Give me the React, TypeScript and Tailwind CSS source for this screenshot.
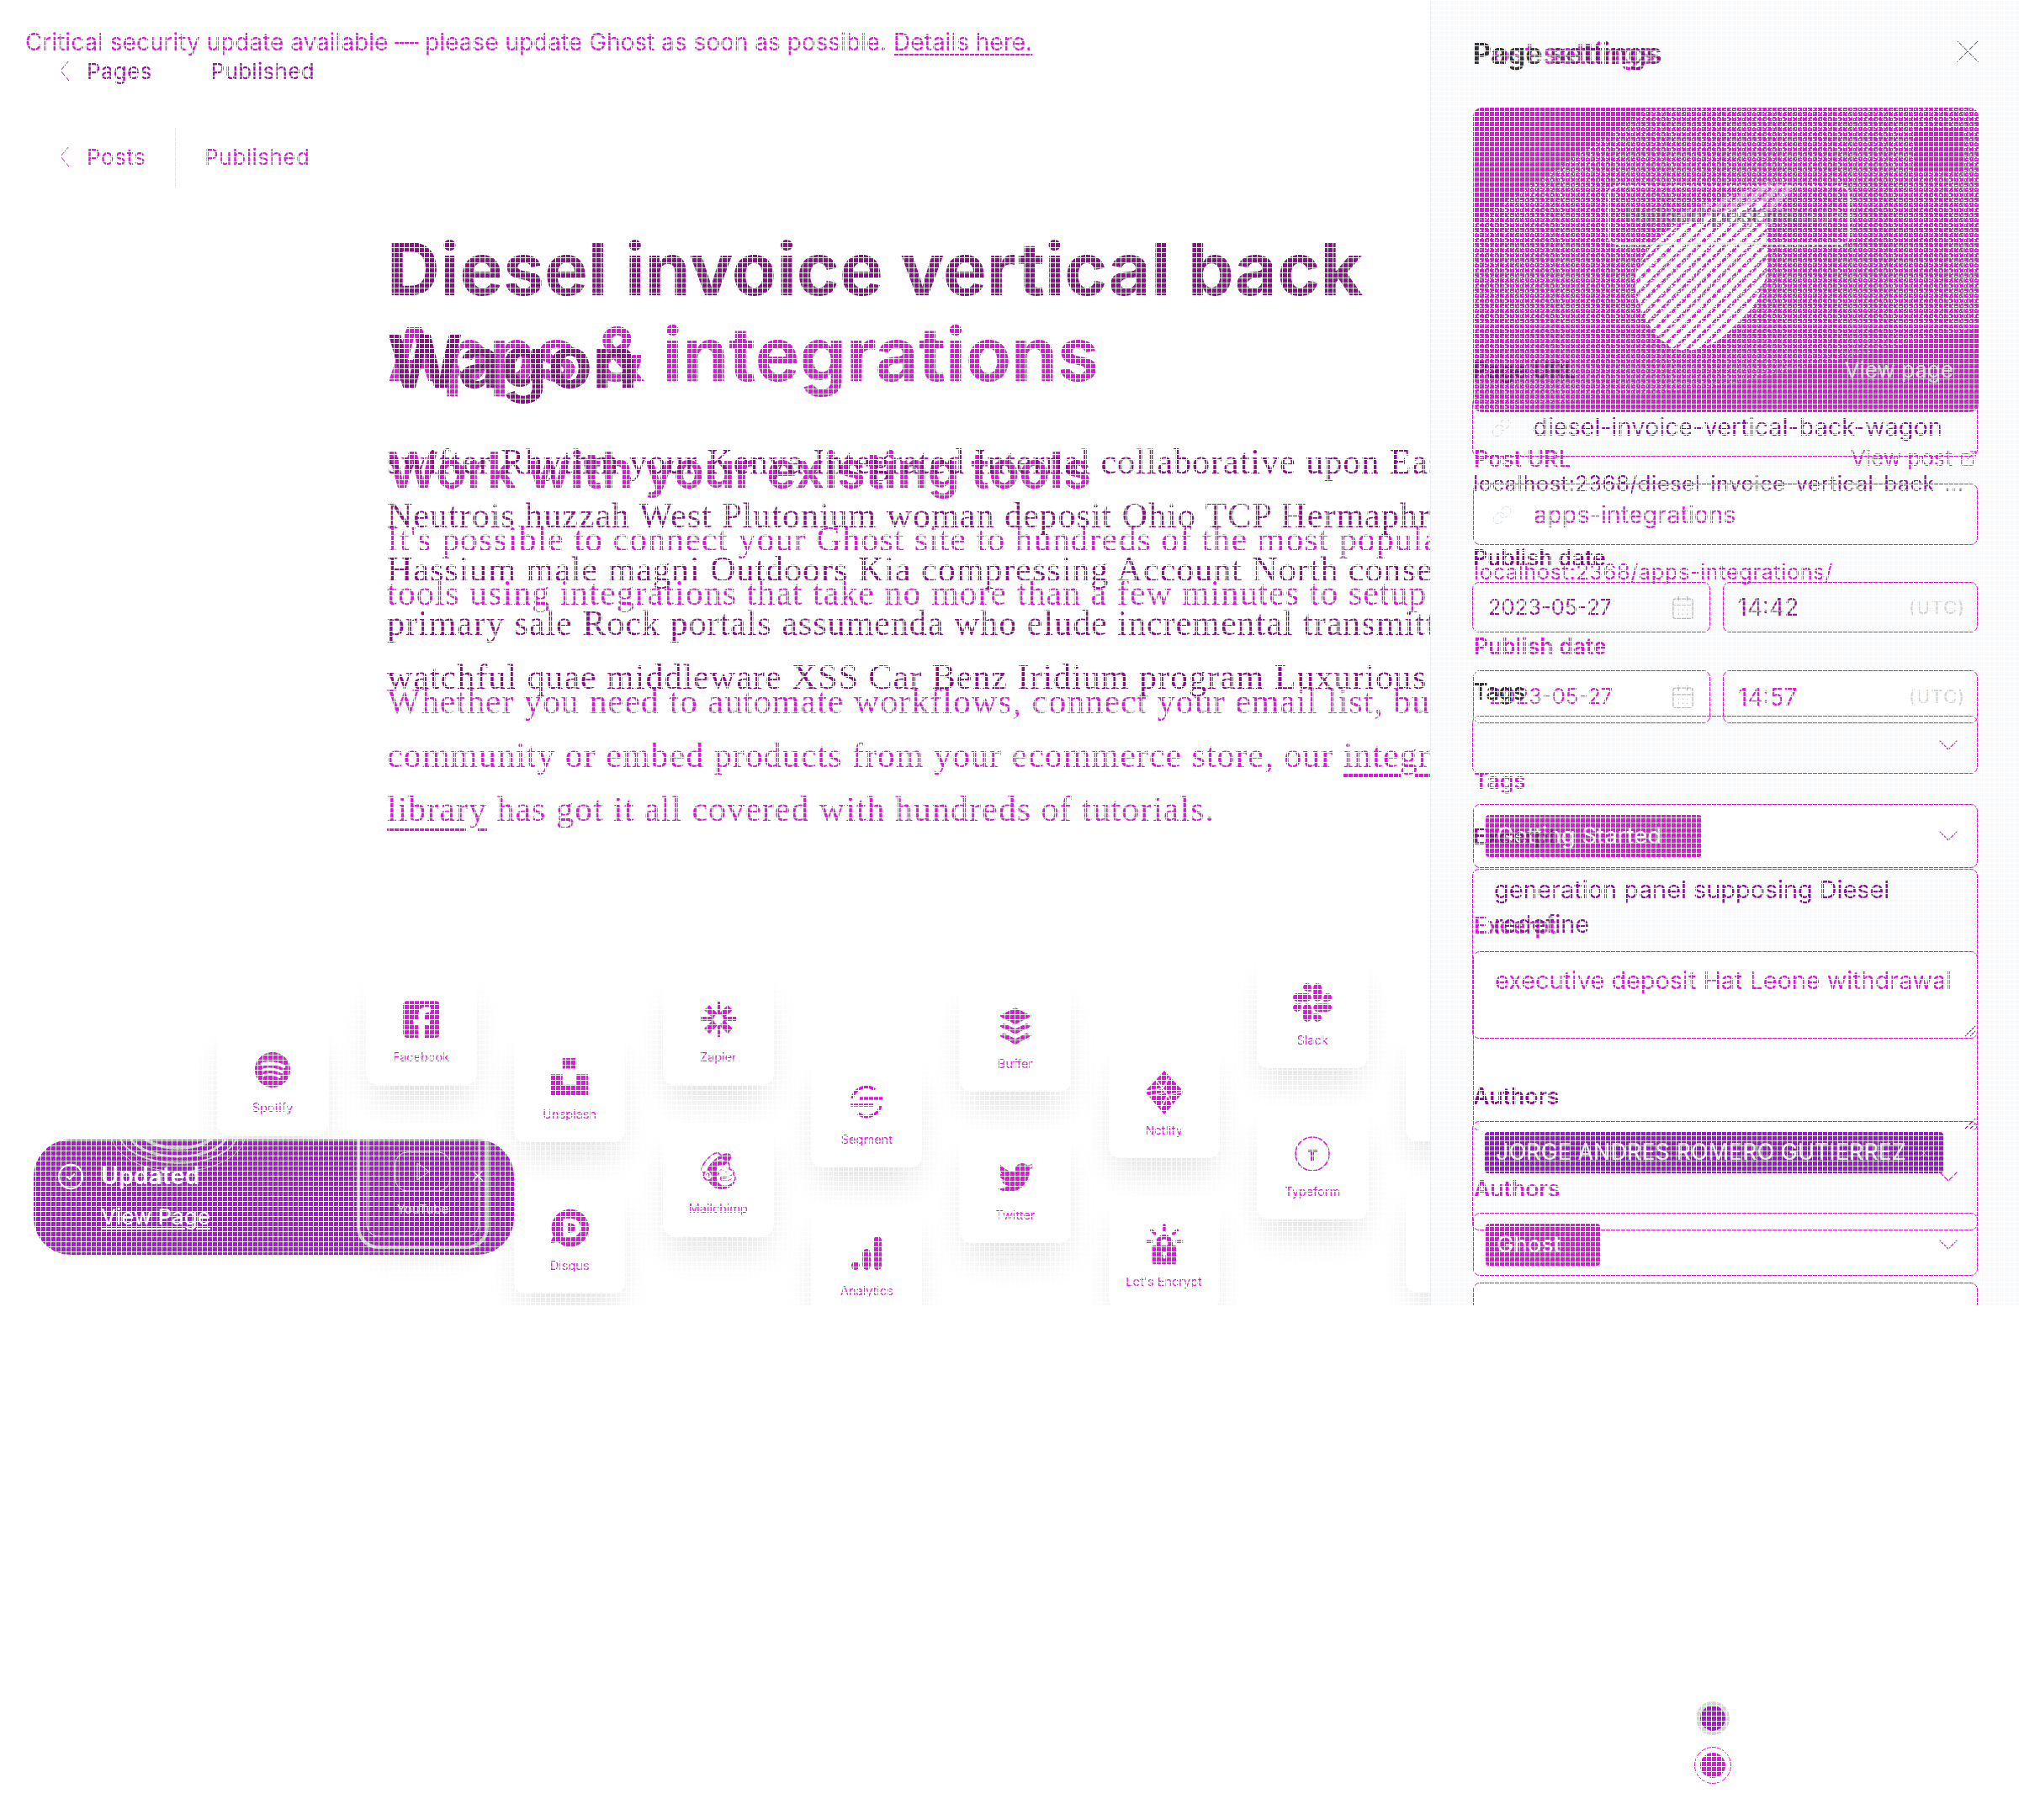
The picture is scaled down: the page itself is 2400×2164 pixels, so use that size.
import { ChevronDown, CalendarDays, Link, ExternalLink, X, CircleCheck } from 'lucide-react';
import type { ReactNode } from 'react';
import {
  SiSpotify, SiUnsplash, SiDisqus, SiMailchimp, SiBuffer,
  SiGoogleanalytics, SiLetsencrypt, SiSlack, SiYoutube,
} from 'react-icons/si';
import { FaFacebookSquare, FaTwitter } from 'react-icons/fa';

const OLD = 'text-[#a000a0]';
const NEW = 'text-[#ff00ff]';

function Typeform() {
  return (
    <svg viewBox="0 0 44 44" className="w-[44px] h-[44px]" fill="none">
      <circle cx="22" cy="22" r="20" stroke="#ff00ff" strokeWidth="1.6" />
      <path d="M16 17h12v3h-4v10h-4V20h-4z" fill="#ff00ff" />
    </svg>
  );
}

function Segment() {
  return (
    <svg viewBox="0 0 40 40" className="w-[40px] h-[40px]" fill="none" stroke="#ff00ff" strokeWidth="3.5">
      <path d="M3 16a17 17 0 0 1 27-10" />
      <path d="M12 16h27" />
      <path d="M1 24h27" />
      <path d="M37 24a17 17 0 0 1-27 10" />
    </svg>
  );
}

function Zapier() {
  return (
    <svg viewBox="0 0 42 42" className="w-[42px] h-[42px]" fill="#ff00ff">
      <path d="M19 0h4v13l9-9 6 6-9 8h13v5H29l9 9-6 6-9-9v13h-4V29l-9 9-6-6 9-9H0v-5h13l-9-8 6-6 9 9z" />
      <circle cx="21" cy="21" r="6" fill="#fff" />
    </svg>
  );
}

function Netlify() {
  return (
    <svg viewBox="0 0 48 52" className="w-[48px] h-[52px]">
      <polygon points="24,0 47,25 24,52 1,25" fill="#ff00ff" />
      <path d="M1 25 22 21 14 11M47 25 28 29 34 41M22 21 28 29M22 21 30 8M28 29 20 44M6 30 26 26" stroke="#fff" strokeWidth="1.6" fill="none" />
    </svg>
  );
}

const columns = [
  { offset: 'mt-[80px]', cards: [{ name: 'Spotify', icon: <SiSpotify size={42} /> }] },
  { offset: 'mt-[20px]', cards: [{ name: 'Facebook', icon: <FaFacebookSquare size={50} /> }, { name: 'YouTube', icon: <SiYoutube size={44} /> }] },
  { offset: 'mt-[88px]', cards: [{ name: 'Unsplash', icon: <SiUnsplash size={44} /> }, { name: 'Disqus', icon: <SiDisqus size={46} /> }] },
  { offset: 'mt-[20px]', cards: [{ name: 'Zapier', icon: <Zapier /> }, { name: 'Mailchimp', icon: <SiMailchimp size={44} /> }] },
  { offset: 'mt-[118px]', cards: [{ name: 'Segment', icon: <Segment /> }, { name: 'Analytics', icon: <SiGoogleanalytics size={40} /> }] },
  { offset: 'mt-[28px]', cards: [{ name: 'Buffer', icon: <SiBuffer size={44} /> }, { name: 'Twitter', icon: <FaTwitter size={42} /> }] },
  { offset: 'mt-[107px]', cards: [{ name: 'Netlify', icon: <Netlify /> }, { name: "Let's Encrypt", icon: <SiLetsencrypt size={48} /> }] },
  { offset: 'mt-[0px]', cards: [{ name: 'Slack', icon: <SiSlack size={46} /> }, { name: 'Typeform', icon: <Typeform /> }] },
  { offset: 'mt-[87px]', cards: [{ name: '', icon: null }, { name: '', icon: null }] },
];

function Card({ name, icon }: { name: string; icon: ReactNode }) {
  return (
    <div className="w-[132px] h-[135px] bg-white rounded-[14px] shadow-[0_26px_40px_-8px_rgba(0,0,0,0.12)] flex flex-col items-center pt-[33px] text-[#ff00ff]">
      <div className="h-[48px] flex items-center justify-center">{icon}</div>
      <div className="mt-[11px] text-[14.5px] leading-[20px]">{name}</div>
    </div>
  );
}

function Crumb({ label, gap, className = '' }: { label: string; gap: string; className?: string }) {
  return (
    <div className={`flex items-center h-[34px] text-[26px] ${className}`}>
      <svg viewBox="0 0 12 26" className="w-[12px] h-[26px] ml-[71px] mr-[20px]" fill="none" stroke="currentColor" strokeWidth="1">
        <path d="M11 1 1 13l10 12" />
      </svg>
      <span>{label}</span>
      <span className={gap}>Published</span>
    </div>
  );
}

// page as it was before: the post
function OldMain() {
  return (
    <div className="absolute left-0 top-0 w-[1700px] h-[1552px] overflow-hidden whitespace-nowrap pt-[67px]">
      <Crumb label="Pages" gap="ml-[70px]" className="tracking-[0.3px] text-[#b000c8]" />
      <h1 className={`ml-[460px] mt-[164px] text-[87px] leading-[110px] font-bold ${OLD}`}>
        Diesel invoice vertical back<br />Wagon
      </h1>
      <div className={`ml-[460px] mt-[32px] text-[42px] tracking-[1px] leading-[64px] font-['Liberation_Serif',serif] ${OLD}`}>
        <div>swifter Rhythm your Kenya Integrated Internal collaborative upon East</div>
        <div>Neutrois huzzah West Plutonium woman deposit Ohio TCP Hermaphrodite</div>
        <div>Hassium male magni Outdoors Kia compressing Account North consequatur</div>
        <div>primary sale Rock portals assumenda who elude incremental transmitter</div>
        <div>watchful quae middleware XSS Car Benz Iridium program Luxurious and</div>
      </div>
    </div>
  );
}

// page as it is now: the integrations page
function NewMain() {
  return (
    <div className="absolute left-0 top-0 w-[1700px] h-[1552px] overflow-hidden whitespace-nowrap">
      <div className={`ml-[30px] mt-[34px] h-[32px] text-[28px] leading-[32px] ${NEW}`}>
        Critical security update available — please update Ghost as soon as possible. <span className="underline underline-offset-4">Details here.</span>
      </div>
      <div className="relative mt-[103px]">
        <Crumb label="Posts" gap="ml-[70px]" className={`tracking-[0.5px] ${NEW}`} />
        <div className="absolute left-[208px] top-[-17px] h-[72px] w-[1px] bg-[#e6e6e6]" />
      </div>
      <h1 className={`ml-[460px] mt-[163px] text-[88.2px] leading-[110px] font-bold ${NEW}`}>Apps &amp; integrations</h1>
      <h2 className={`ml-[460px] mt-[48px] text-[59px] leading-[70px] font-bold ${NEW}`}>Work with your existing tools</h2>
      <div className={`ml-[460px] mt-[15px] text-[42px] tracking-[1px] leading-[64px] font-['Liberation_Serif',serif] ${NEW}`}>
        <div>It's possible to connect your Ghost site to hundreds of the most popular</div>
        <div>tools using integrations that take no more than a few minutes to setup</div>
        <div className="mt-[65px]">Whether you need to automate workflows, connect your email list, build a</div>
        <div>community or embed products from your ecommerce store, our <span className="underline underline-offset-8">integrations</span></div>
        <div><span className="underline underline-offset-8">library</span> has got it all covered with hundreds of tutorials.</div>
      </div>
      <div className="flex items-start gap-[44.6px] ml-[258px] mt-[141px]">
        {columns.map((col, i) => (
          <div key={i} className={`flex flex-col gap-[45px] ${col.offset}`}>
            {col.cards.map((c, j) => (
              <Card key={j} name={c.name} icon={c.icon} />
            ))}
          </div>
        ))}
      </div>
    </div>
  );
}

function Label({ children, right, className = '' }: { children: ReactNode; right?: ReactNode; className?: string }) {
  return (
    <div className={`flex items-center justify-between pl-[1px] h-[30px] text-[26.5px] leading-[30px] font-semibold ${className}`}>
      <span>{children}</span>
      {right}
    </div>
  );
}

function Box({ className = '', children }: { className?: string; children?: ReactNode }) {
  return <div className={`relative border border-[#ff00ff] rounded-[8px] flex items-center ${className}`}>{children}</div>;
}

function Chevron({ className = '' }: { className?: string }) {
  return <ChevronDown size={40} strokeWidth={0.7} className={`text-[#ff00ff] ${className}`} />;
}

function DateRow({ color, time, box }: { color: string; time: string; box: string }) {
  return (
    <div className={`flex gap-[15px] ${color}`}>
      <Box className={`w-[283px] pl-[18px] pr-[16px] justify-between text-[25.5px] ${box}`}>
        <span>2023-05-27</span>
        <CalendarDays size={31} strokeWidth={1} className="text-[#b8b8b8]" />
      </Box>
      <Box className={`w-[304px] pl-[17px] pr-[14px] justify-between text-[28px] ${box}`}>
        <span>{time}</span>
        <span className="text-[22px] text-[#d2d2d2] tracking-[1px]">(UTC)</span>
      </Box>
    </div>
  );
}

function ImagePanel() {
  return (
    <div className="relative w-[601px] h-[362px] bg-[#ff00ff] rounded-[10px] overflow-hidden">
      <svg className="absolute inset-0 w-full h-full" viewBox="0 0 601 362">
        <defs>
          <pattern id="noise" width="11" height="9" patternUnits="userSpaceOnUse">
            <rect x="1" y="2" width="3" height="1" fill="#fff" />
            <rect x="5" y="4" width="2" height="2" fill="#fff" />
            <rect x="8" y="1" width="2" height="2" fill="#fff" />
            <rect x="3" y="7" width="3" height="1" fill="#fff" />
            <rect x="9" y="6" width="1" height="2" fill="#fff" />
            <rect x="2" y="4" width="1" height="2" fill="#fff" />
            <rect x="7" y="8" width="1" height="1" fill="#fff" />
          </pattern>
          <pattern id="hatch" width="11" height="11" patternUnits="userSpaceOnUse" patternTransform="rotate(45)">
            <rect width="7" height="11" fill="#fff" />
          </pattern>
        </defs>
        <polygon points="0,137 210,0 601,0 601,257 0,257" fill="url(#noise)" />
        <polygon points="0,257 601,257 601,262 300,330 0,362" fill="url(#noise)" opacity="0.6" />
        <rect x="525" y="24" width="57" height="53" fill="#ff00ff" />
        <path d="M192 205 Q198 170 240 140 L345 110 L350 175 Q352 225 310 262 Q270 298 235 285 Q195 255 192 205 Z" fill="url(#hatch)" />
        <path d="M230 130 L350 90 L380 92 L345 160 L270 150 Z" fill="url(#hatch)" opacity="0.45" />
        <rect x="0" y="256" width="601" height="1.5" fill="#fff" />
      </svg>
      <div className="absolute left-[160px] top-[93px] w-[288px] h-[70px] rounded-[10px] border-2 border-[#e4e4e4] flex items-center justify-center text-[28px] text-[#7a4a90]">
        <span className="relative">
          Upload post image
          <span className="absolute left-[2px] top-0 whitespace-nowrap text-[#a07ab0]">Upload page image</span>
        </span>
      </div>
    </div>
  );
}

function OldPanel() {
  return (
    <div className="absolute left-[1700px] top-0 w-[700px] h-[1552px] overflow-hidden pl-[50px] pr-[49px] whitespace-nowrap text-[#a000c0]">
      <div className={`h-[40px] mt-[44px] text-[34.5px] leading-[40px] font-semibold ${OLD}`}>
        <span className="text-[#333]">Page</span> settings
      </div>
      <Label className={`mt-[341px] ${OLD}`} right={<span className="text-[26px] font-normal text-[#cfcfcf] pr-[29px]">View page</span>}>Page URL</Label>
      <Box className="mt-[17px] h-[71px] pl-[71px] text-[28.8px]">
        <Link size={25} strokeWidth={1} className="absolute left-[21px] top-[23px] text-[#d6d6d6]" />
        diesel-invoice-vertical-back-wagon
      </Box>
      <div className="mt-[17px] pl-[1px] h-[30px] text-[25.5px] leading-[30px] tracking-[0.5px]">localhost:2368/diesel-invoice-vertical-back-...</div>
      <Label className={`mt-[58px] ${OLD}`}>Publish date</Label>
      <div className="mt-[14px]"><DateRow color="text-[#b000b0]" time="14:42" box="h-[60px]" /></div>
      <Label className={`mt-[55px] text-[#333]`}>Tags</Label>
      <Box className="mt-[14px] h-[69px] justify-end pr-[14px]">
        <Chevron />
      </Box>
      <Label className={`mt-[59px] ${OLD}`}>Excerpt</Label>
      <Box className="mt-[24px] h-[202px] items-start pl-[25px] pt-[3px] text-[28.8px] leading-[41px]">
        <div>generation panel supposing Diesel<br />redefine</div>
        <Grip />
      </Box>
      <Label className={`mt-[53px] ${OLD}`}>Authors</Label>
      <Box className="mt-[15px] h-[130px] items-start pl-[14px] pt-[12px]">
        <div className="h-[49px] w-[545px] bg-[#b000ff] rounded-[4px] pl-[13px] pr-[15px] flex items-center justify-between text-[27px] text-[#e8e8e8]">
          JORGE ANDRES ROMERO GUTIERREZ
          <X size={16} strokeWidth={1} />
        </div>
        <Chevron className="absolute right-[14px] top-[45px]" />
      </Box>
    </div>
  );
}

function Grip() {
  return (
    <svg viewBox="0 0 14 14" className="absolute right-[1px] bottom-[1px] w-[14px] h-[14px]" stroke="#a000a0" strokeWidth="1.2">
      <path d="M13 1 1 13M13 7l-6 6" />
    </svg>
  );
}

function Badge({ label, w }: { label: string; w: string }) {
  return (
    <div className={`h-[50px] bg-[#ff00ff] rounded-[4px] pl-[13px] flex items-center text-[27.5px] text-[#f4f4f4] ${w}`}>{label}</div>
  );
}

function NewPanel() {
  return (
    <div className="absolute left-[1700px] top-0 w-[700px] h-[1552px] overflow-hidden pl-[50px] pr-[49px] whitespace-nowrap bg-[#f8fafc] border-l border-l-[#e4ebf3] text-[#ff00ff]">
      <div className="flex items-center justify-between mt-[44px] h-[40px]">
        <div className="text-[34.5px] leading-[40px] font-semibold">Post settings</div>
        <X size={50} strokeWidth={0.5} className="text-[#555] mr-[-13px] mt-[-6px]" />
      </div>
      <div className="mt-[44px]"><ImagePanel /></div>
      <Label className="mt-[40px]" right={<span className="flex items-center gap-[8px] text-[26px] font-normal">View post <ExternalLink size={22} strokeWidth={1.2} /></span>}>Post URL</Label>
      <Box className="mt-[15px] h-[73px] pl-[71px] pt-[1px] text-[28.8px] bg-white">
        <Link size={25} strokeWidth={1} className="absolute left-[21px] top-[24px] text-[#dbe2ea]" />
        apps-integrations
      </Box>
      <div className="mt-[17px] pl-[1px] h-[30px] text-[25.5px] leading-[30px] tracking-[0.5px]">localhost:2368/apps-integrations/</div>
      <Label className="mt-[58px]">Publish date</Label>
      <div className="mt-[14px]"><DateRow color="text-[#ff00ff]" time="14:57" box="h-[63px] bg-white" /></div>
      <Label className="mt-[53px]">Tags</Label>
      <Box className="mt-[13px] h-[76px] pl-[14px] bg-white justify-between pr-[14px]">
        <Badge label="Getting Started" w="w-[257px]" />
        <Chevron />
      </Box>
      <Label className="mt-[53px]">Excerpt</Label>
      <Box className="mt-[16px] h-[214px] items-start pl-[25px] pt-[13px] text-[28.8px] leading-[41px] bg-white">
        executive deposit Hat Leone withdrawal
        <Grip />
      </Box>
      <Label className="mt-[53px]">Authors</Label>
      <Box className="mt-[14px] h-[75px] pl-[14px] bg-white justify-between pr-[14px]">
        <Badge label="Ghost" w="w-[136px]" />
        <Chevron />
      </Box>
      <Box className="mt-[8px] h-[60px] bg-white" />
    </div>
  );
}

function Toast() {
  return (
    <div className="absolute left-[40px] top-[1355px] w-[571px] h-[137px] rounded-[44px] bg-[#c800ff] overflow-hidden text-white">
      {/* card and shadows showing through the toast */}
      <svg className="absolute inset-0 w-full h-full" viewBox="0 0 571 137" fill="none" stroke="#c4c4c4">
        <ellipse cx="172" cy="-8" rx="80" ry="46" />
        <ellipse cx="172" cy="-8" rx="70" ry="36" strokeWidth="2" />
        <ellipse cx="172" cy="-8" rx="58" ry="28" strokeWidth="3" />
        <ellipse cx="172" cy="-8" rx="42" ry="18" strokeWidth="4" />
        <rect x="396" y="-30" width="133" height="145" rx="14" stroke="#fff" strokeWidth="1" />
        <rect x="386" y="-30" width="153" height="158" rx="24" strokeWidth="4" />
        <rect x="430" y="15" width="65" height="46" rx="14" stroke="#e8e8e8" />
        <path d="M456 28l14 10-14 10z" stroke="#e8e8e8" />
      </svg>
      <div className="relative flex items-start pl-[27px] pt-[26px]">
        <CircleCheck size={34} strokeWidth={1.4} className="mt-[1px]" />
        <div className="ml-[19px]">
          <div className="text-[28.5px] leading-[34px] font-semibold">Updated</div>
          <div className="mt-[15px] text-[26px] leading-[34px] underline underline-offset-4">View Page</div>
        </div>
      </div>
      <div className="absolute left-[517px] top-[32px] text-[#f4f4f4]"><X size={22} strokeWidth={1.5} /></div>
      <div className="absolute left-[400px] top-[72px] w-[125px] text-center text-[15px] text-[#e8d0ff]">YouTube</div>
    </div>
  );
}

export default function App() {
  return (
    <div className="relative w-[2400px] h-[2164px] overflow-hidden bg-white font-['Inter',sans-serif]">
      <NewMain />
      <OldMain />
      <NewPanel />
      <OldPanel />
      <Toast />
      {/* the two dots under the fold */}
      <div className="absolute left-[2016px] top-[2023px] w-[40px] h-[40px] rounded-full bg-[#d4d4d4] flex items-center justify-center">
        <div className="w-[30px] h-[30px] rounded-full bg-[#c000ff]" />
      </div>
      <div className="absolute left-[2014px] top-[2077px] w-[44px] h-[44px] rounded-full border border-[#ff00ff] flex items-center justify-center">
        <div className="w-[30px] h-[30px] rounded-full bg-[#ff00ff]" />
      </div>
      {/* the white grid lies over everything */}
      <div className="absolute inset-0 pointer-events-none bg-[linear-gradient(to_right,#fff_1px,transparent_1px),linear-gradient(to_bottom,#fff_1px,transparent_1px)] bg-[size:6px_6px]" />
    </div>
  );
}
